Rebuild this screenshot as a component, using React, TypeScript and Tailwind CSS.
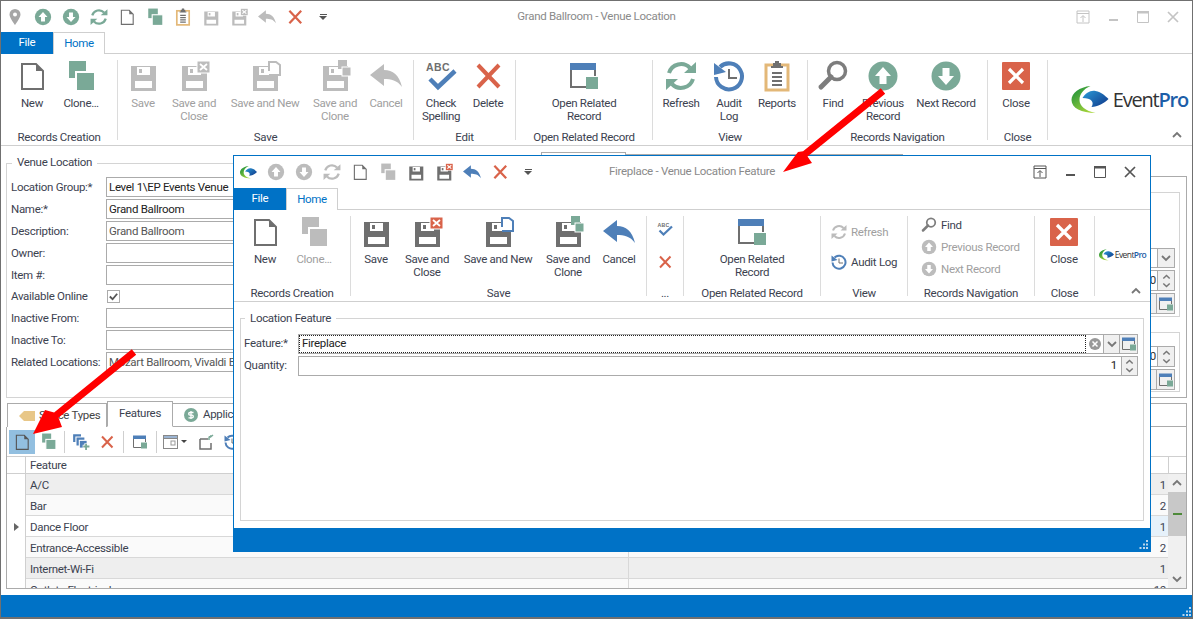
import type { ReactNode } from "react";

const TEAL = "#7aa997";
const GRAY = "#6f6f6f";
const OFF = "#bcbcbc";
const RED = "#d9634a";
const BLUE = "#4e7fb8";

type IconProps = { c?: string; className?: string };

const base = "w-[32px] h-[32px]";

function Doc({ c = GRAY, className = base }: IconProps) {
  return (
    <svg viewBox="0 0 32 32" className={className}>
      <path d="M6 4H20L27 11V29H6Z" fill="none" stroke={c} strokeWidth="2" />
      <path d="M20 4V11H27Z" fill={c} />
    </svg>
  );
}

function Clone({ c = TEAL, className = base }: IconProps) {
  return (
    <svg viewBox="0 0 32 32" className={className}>
      <rect x="4" y="1" width="17" height="17" fill={c} />
      <rect x="11" y="12" width="19" height="19" fill={c} stroke="#fff" strokeWidth="2" />
    </svg>
  );
}

function Save({ c = GRAY, over, tone = "on", className = base }: IconProps & { over?: "close" | "new" | "clone"; tone?: "on" | "off" }) {
  const on = tone === "on";
  return (
    <svg viewBox="0 0 32 32" className={className}>
      <g transform="translate(4 6)">
        <path fillRule="evenodd" fill={c} d="M0 0H25V25H0Z M6 1V9H19V1Z M4 15V22H21V15Z" />
        <rect x="8" y="3" width="3" height="4" fill={c} />
      </g>
      {over === "close" && (
        <g>
          <rect x="19" y="1" width="13" height="12" fill={on ? RED : OFF} stroke="#fff" />
          <path d="M22 4L29 10M29 4L22 10" stroke="#fff" strokeWidth="1.8" />
        </g>
      )}
      {over === "new" && <path d="M20 11V2H27L31 5V15H20" fill="#fff" stroke={on ? BLUE : OFF} strokeWidth="2" />}
      {over === "clone" && (
        <g fill={on ? TEAL : OFF}>
          <rect x="19" y="0" width="9" height="9" />
          <rect x="23" y="7" width="9" height="9" stroke="#fff" />
        </g>
      )}
    </svg>
  );
}

function Undo({ c = BLUE, className = base }: IconProps) {
  return (
    <svg viewBox="0 0 32 32" className={className}>
      <path d="M0 15L14 4V10C23 10 29 15 32 27C27 20 21 19 14 19V26Z" fill={c} />
    </svg>
  );
}

function Cross({ c = RED, className = base }: IconProps) {
  return (
    <svg viewBox="0 0 32 32" className={className}>
      <path d="M6 5L27 27M27 5L6 27" stroke={c} strokeWidth="4" />
    </svg>
  );
}

function Related({ className = base }: IconProps) {
  return (
    <svg viewBox="0 0 32 32" className={className}>
      <rect x="2" y="3" width="26" height="7" fill={BLUE} />
      <path d="M3 10V27H18M27 10V16" stroke={GRAY} strokeWidth="2" fill="none" />
      <rect x="18" y="17" width="12" height="12" fill={TEAL} />
    </svg>
  );
}

function Refresh({ c = TEAL, className = base }: IconProps) {
  return (
    <svg viewBox="0 0 32 32" className={className}>
      <path d="M4 13A12.5 12.5 0 0 1 25 8" stroke={c} strokeWidth="4" fill="none" />
      <path d="M28 19A12.5 12.5 0 0 1 7 24" stroke={c} strokeWidth="4" fill="none" />
      <path d="M19 13H31V2Z M13 19H1V30Z" fill={c} />
    </svg>
  );
}

function Audit({ className = base }: IconProps) {
  return (
    <svg viewBox="0 0 32 32" className={className}>
      <path d="M7 7A13 13 0 1 1 3 17" stroke={BLUE} strokeWidth="4" fill="none" />
      <path d="M1 3L13 12L1 15Z" fill={BLUE} />
      <path d="M16 9V18H24" stroke={GRAY} strokeWidth="2" fill="none" />
    </svg>
  );
}

function Reports({ className = base }: IconProps) {
  return (
    <svg viewBox="0 0 32 32" className={className}>
      <rect x="5" y="5" width="22" height="25" fill="#fff" stroke="#e3b878" strokeWidth="3" />
      <path d="M12 6V3H14V1H18V3H20V6H22V8H10V6Z" fill={GRAY} />
      <path d="M11 13H21M11 17H21M11 21H21M11 25H21" stroke={GRAY} strokeWidth="2" />
    </svg>
  );
}

function Find({ className = base }: IconProps) {
  return (
    <svg viewBox="0 0 32 32" className={className}>
      <circle cx="20" cy="11" r="8.5" fill="none" stroke="#7d7d7d" strokeWidth="3.5" />
      <path d="M14 17L4 27" stroke="#7d7d7d" strokeWidth="5" strokeLinecap="round" />
    </svg>
  );
}

function Circle({ c = TEAL, up, className = base }: IconProps & { up?: boolean }) {
  return (
    <svg viewBox="0 0 32 32" className={className}>
      <circle cx="16" cy="16" r="14.5" fill={c} />
      <path d={up ? "M16 7L24 16H19.5V24H12.5V16H8Z" : "M16 25L24 16H19.5V8H12.5V16H8Z"} fill="#fff" />
    </svg>
  );
}

function CloseBox({ className = base }: IconProps) {
  return (
    <svg viewBox="0 0 32 32" className={className}>
      <rect x="2" y="2" width="28" height="28" rx="1" fill={RED} />
      <path d="M9 9L23 23M23 9L9 23" stroke="#fff" strokeWidth="3.2" />
    </svg>
  );
}

function Spell({ className = base }: IconProps) {
  return (
    <svg viewBox="0 0 32 32" className={className}>
      <text x="1" y="11" fontSize="10.5" fontWeight="700" fill={GRAY} fontFamily="Liberation Sans, sans-serif" letterSpacing="0.4">ABC</text>
      <path d="M5 19L13 27L30 11" fill="none" stroke={BLUE} strokeWidth="4.5" />
    </svg>
  );
}

function Marker({ className = "w-[18px] h-[18px]" }: IconProps) {
  return (
    <svg viewBox="0 0 18 18" className={className}>
      <path fillRule="evenodd" d="M9 1A5.5 5.5 0 0 0 3.5 6.5C3.5 10 9 17 9 17S14.5 10 14.5 6.5A5.5 5.5 0 0 0 9 1Z M9 4.500A2 2 0 1 1 9 8.500A2 2 0 1 1 9 4.500Z" fill="#a6a6a6" />
    </svg>
  );
}

function Swoosh({ className = "" }: IconProps) {
  return (
    <svg viewBox="0 0 37 28" className={className}>
      <defs>
        <linearGradient id="swGreen" x1="0" y1="0" x2="0.7" y2="1">
          <stop offset="0" stopColor="#0f8a3c" />
          <stop offset="1" stopColor="#a6d53a" />
        </linearGradient>
        <linearGradient id="swBlue" x1="0" y1="0" x2="1" y2="0.8">
          <stop offset="0" stopColor="#2a9bd8" />
          <stop offset="1" stopColor="#123f8f" />
        </linearGradient>
      </defs>
      <path d="M19 0C8 1 0 7 0 14C0 22 10 27 24 27C14 25 8 20 8 14C8 8 12 3 19 0Z" fill="url(#swGreen)" />
      <path d="M11 12C14 7 19 4 24 5C30 6 34 10 37 13C33 17 26 21 20 21C23 16 20 12 11 12Z" fill="url(#swBlue)" />
    </svg>
  );
}

function Chevron({ up, className = "w-[10px] h-[10px]", c = "#777" }: IconProps & { up?: boolean }) {
  return (
    <svg viewBox="0 0 10 10" className={className}>
      <path d={up ? "M1 7L5 3L9 7" : "M1 3L5 7L9 3"} fill="none" stroke={c} strokeWidth="1.8" />
    </svg>
  );
}

function WinButtons({ c }: { c: string }) {
  return (
    <div className="flex items-center">
      <span className="flex w-[30px] justify-center">
        <svg viewBox="0 0 14 14" className="h-[14px] w-[14px]">
          <path d="M1 1H13V13H1Z M1 3.500H13" fill="none" stroke={c} />
          <path d="M7 12V6M4.500 8L7 5.500L9.500 8" fill="none" stroke={c} />
        </svg>
      </span>
      <span className="flex w-[30px] justify-center">
        <span className="mt-[6px] h-[2px] w-[9px]" style={{ backgroundColor: c }} />
      </span>
      <span className="flex w-[30px] justify-center">
        <svg viewBox="0 0 12 12" className="h-[12px] w-[12px]">
          <path d="M0.500 0.500H11.500V11.500H0.500Z" fill="none" stroke={c} />
          <rect width="12" height="2.500" fill={c} />
        </svg>
      </span>
      <span className="flex w-[30px] justify-center">
        <svg viewBox="0 0 12 12" className="h-[12px] w-[12px]">
          <path d="M1 1L11 11M11 1L1 11" stroke={c} strokeWidth="1.700" />
        </svg>
      </span>
    </div>
  );
}

function TitleBar({ items, title, winColor, logo, h, pr }: { items: ReactNode[]; title: string; winColor: string; logo?: boolean; h: string; pr: string }) {
  return (
    <div className={`grid grid-cols-[1fr_auto_1fr] items-center ${h}`}>
      <div className="flex items-center">
        {logo && (
          <span className="flex w-[28px] shrink-0 justify-center">
            <Swoosh className="h-[13px] w-[17px]" />
          </span>
        )}
        {items.map((it, i) => (
          <span key={i} className="flex w-[28px] shrink-0 justify-center">{it}</span>
        ))}
        <span className="flex w-[28px] shrink-0 flex-col items-center justify-center gap-[1px]">
          <span className="h-[1px] w-[7px] bg-[#555]" />
          <svg viewBox="0 0 8 4" className="h-[4px] w-[8px]"><path d="M0 0H8L4 4Z" fill="#555" /></svg>
        </span>
      </div>
      <span className="text-[#8a8a8a]">{title}</span>
      <div className={`flex justify-end ${pr}`}><WinButtons c={winColor} /></div>
    </div>
  );
}

function TabRow() {
  return (
    <div className="flex h-[22px] border-b border-[#cfcfcf]">
      <span className="flex h-[22px] w-[52px] items-center justify-center bg-[#0072c6] text-white">File</span>
      <span className="flex h-[22px] w-[52px] items-center justify-center border border-b-0 border-[#cfcfcf] bg-white text-[#0072c6]">Home</span>
    </div>
  );
}

function Btn({ w, icon, text, off }: { w: string; icon: ReactNode; text: ReactNode; off?: boolean }) {
  return (
    <div className={`flex shrink-0 flex-col items-center text-center ${w}`}>
      <div className="flex h-[32px] items-center justify-center">{icon}</div>
      <div className={`mt-[5px] leading-[13px] ${off ? "text-[#a0a0a0]" : ""}`}>{text}</div>
    </div>
  );
}

function Group({ w, label, children, pl = "" }: { w: string; label: string; children: ReactNode; pl?: string }) {
  return (
    <div className={`flex h-[80px] shrink-0 flex-col border-r border-[#dcdcdc] ${w}`}>
      <div className={`flex h-[70px] shrink-0 ${pl}`}>{children}</div>
      <div className="h-[14px] shrink-0 whitespace-nowrap text-center leading-[14px]">{label}</div>
    </div>
  );
}

function SmallRow({ icon, text, off }: { icon: ReactNode; text: string; off?: boolean }) {
  return (
    <div className={`flex h-[22px] items-center gap-[4px] whitespace-nowrap ${off ? "text-[#a0a0a0]" : ""}`}>
      {icon}
      <span className="pt-[1px]">{text}</span>
    </div>
  );
}

function EventProLogo({ small }: { small?: boolean }) {
  return (
    <div className={`flex items-center ${small ? "gap-[1px]" : "gap-[3px]"}`}>
      <Swoosh className={small ? "h-[12px] w-[15px]" : "h-[28px] w-[40px]"} />
      <span className={`font-['Open_Sans',sans-serif] text-[#333] ${small ? "text-[8.500px] tracking-[-0.6px]" : "text-[20px] tracking-[-1.2px]"}`}>
        Event<b className="font-semibold text-[#1d5ea8]">Pro</b>
      </span>
    </div>
  );
}

function MainRibbon() {
  return (
    <div className="flex h-[92px] border-b border-[#cfcfcf] pt-[6px]">
      <Group w="w-[117px]" label="Records Creation" pl="pl-[7px]">
        <Btn w="w-[48px]" icon={<Doc />} text="New" />
        <Btn w="w-[50px]" icon={<Clone />} text="Clone…" />
      </Group>
      <Group w="w-[296px]" label="Save">
        <Btn w="w-[50px]" off icon={<Save c={OFF} />} text="Save" />
        <Btn w="w-[52px]" off icon={<Save c={OFF} over="close" tone="off" />} text={<>Save and<br />Close</>} />
        <Btn w="w-[90px]" off icon={<Save c={OFF} over="new" tone="off" />} text="Save and New" />
        <Btn w="w-[50px]" off icon={<Save c={OFF} over="clone" tone="off" />} text={<>Save and<br />Clone</>} />
        <Btn w="w-[52px]" off icon={<Undo c={OFF} />} text="Cancel" />
      </Group>
      <Group w="w-[102px]" label="Edit">
        <Btn w="w-[54px]" icon={<Spell />} text={<>Check<br />Spelling</>} />
        <Btn w="w-[40px]" icon={<Cross />} text="Delete" />
      </Group>
      <Group w="w-[137px]" label="Open Related Record">
        <Btn w="w-[136px]" icon={<Related />} text={<>Open Related<br />Record</>} />
      </Group>
      <Group w="w-[155px]" label="View">
        <Btn w="w-[56px]" icon={<Refresh />} text="Refresh" />
        <Btn w="w-[40px]" icon={<Audit />} text={<>Audit<br />Log</>} />
        <Btn w="w-[56px]" icon={<Reports />} text="Reports" />
      </Group>
      <Group w="w-[180px]" label="Records Navigation">
        <Btn w="w-[50px]" icon={<Find />} text="Find" />
        <Btn w="w-[50px]" icon={<Circle up />} text={<>Previous<br />Record</>} />
        <Btn w="w-[76px]" icon={<Circle />} text="Next Record" />
      </Group>
      <Group w="w-[60px]" label="Close">
        <Btn w="w-[56px]" icon={<CloseBox />} text="Close" />
      </Group>
      <div className="flex h-[80px] flex-1 flex-col items-end pr-[3px]">
        <div className="mt-[25px] flex h-[45px] w-full items-start justify-end pr-[1px]"><EventProLogo /></div>
        <Chevron up className="mr-[6px] h-[10px] w-[12px]" />
      </div>
    </div>
  );
}

function SubRibbon() {
  return (
    <div className="flex h-[92px] border-b border-[#cfcfcf] pt-[6px]">
      <Group w="w-[117px]" label="Records Creation" pl="pl-[7px]">
        <Btn w="w-[48px]" icon={<Doc />} text="New" />
        <Btn w="w-[50px]" off icon={<Clone c={OFF} />} text="Clone…" />
      </Group>
      <Group w="w-[296px]" label="Save">
        <Btn w="w-[50px]" icon={<Save />} text="Save" />
        <Btn w="w-[52px]" icon={<Save over="close" />} text={<>Save and<br />Close</>} />
        <Btn w="w-[90px]" icon={<Save over="new" />} text="Save and New" />
        <Btn w="w-[50px]" icon={<Save over="clone" />} text={<>Save and<br />Clone</>} />
        <Btn w="w-[52px]" icon={<Undo />} text="Cancel" />
      </Group>
      <Group w="w-[37px]" label="...">
        <div className="flex w-full flex-col items-center gap-[17px] pt-[5px]">
          <Spell className="h-[16px] w-[16px]" />
          <Cross className="h-[16px] w-[16px]" />
        </div>
      </Group>
      <Group w="w-[137px]" label="Open Related Record">
        <Btn w="w-[136px]" icon={<Related />} text={<>Open Related<br />Record</>} />
      </Group>
      <Group w="w-[87px]" label="View">
        <div className="flex flex-col gap-[8px] pl-[10px] pt-[5px]">
          <SmallRow off icon={<Refresh c={OFF} className="h-[16px] w-[16px]" />} text="Refresh" />
          <SmallRow icon={<Audit className="h-[16px] w-[16px]" />} text="Audit Log" />
        </div>
      </Group>
      <Group w="w-[127px]" label="Records Navigation">
        <div className="-mt-[2px] flex flex-col pl-[13px]">
          <SmallRow icon={<Find className="h-[16px] w-[16px]" />} text="Find" />
          <SmallRow off icon={<Circle c={OFF} up className="h-[16px] w-[16px]" />} text="Previous Record" />
          <SmallRow off icon={<Circle c={OFF} className="h-[16px] w-[16px]" />} text="Next Record" />
        </div>
      </Group>
      <Group w="w-[60px]" label="Close">
        <Btn w="w-[58px]" icon={<CloseBox />} text="Close" />
      </Group>
      <div className="flex h-[80px] flex-1 flex-col items-center">
        <div className="mt-[33px] flex h-[37px] w-full items-start justify-center"><EventProLogo small /></div>
        <Chevron up className="ml-[26px] h-[10px] w-[12px]" />
      </div>
    </div>
  );
}

function Field({ label, value, muted }: { label: string; value?: string; muted?: boolean }) {
  return (
    <div className="flex h-[22px] items-center">
      <span className="w-[95px] shrink-0 whitespace-nowrap pt-[1px]">{label}</span>
      <div className={`flex h-[20px] flex-1 items-center overflow-hidden whitespace-nowrap border border-[#ababab] pl-[2px] pt-[1px] ${muted ? "text-[#555]" : "text-[#222]"}`}>{value}</div>
    </div>
  );
}

function VenueForm() {
  return (
    <div className="ml-[5px] mt-[17px] h-[235px] w-[530px] shrink-0 border border-[#d4d4d4] pl-[4px] pr-[6px]">
      <div className="-mt-[9px] ml-[1px] w-fit bg-white px-[5px] leading-[14px]">Venue Location</div>
      <div className="mt-[7px]">
        <Field label="Location Group:*" value="Level 1\EP Events Venue" />
        <Field label="Name:*" value="Grand Ballroom" />
        <Field label="Description:" value="Grand Ballroom" muted />
        <Field label="Owner:" />
        <Field label="Item #:" />
        <div className="flex h-[21px] items-center">
          <span className="w-[96px] shrink-0 whitespace-nowrap pt-[1px]">Available Online</span>
          <span className="flex h-[13px] w-[13px] items-center justify-center border border-[#ababab]">
            <svg viewBox="0 0 12 12" className="h-[11px] w-[11px]"><path d="M2 6L5 9L10 3" fill="none" stroke="#555" strokeWidth="2" /></svg>
          </span>
        </div>
        <Field label="Inactive From:" />
        <Field label="Inactive To:" />
        <Field label="Related Locations:" value="Mozart Ballroom, Vivaldi Ba" muted />
      </div>
    </div>
  );
}

function SideSpinner() {
  return (
    <div className="flex h-[21px] w-[60px] border border-[#ababab] text-[#333]">
      <span className="flex-1 pr-[1px] text-right leading-[19px]">0</span>
      <span className="flex w-[17px] flex-col items-center justify-center border-l border-[#ababab] bg-[#f0f0f0]">
        <Chevron up className="h-[8px] w-[9px]" />
        <Chevron className="h-[8px] w-[9px]" />
      </span>
    </div>
  );
}

function SideButtons() {
  return (
    <div className="mt-[2px] flex h-[21px] w-[60px] justify-end border border-[#ababab] bg-[#f0f0f0]">
      <span className="flex w-[18px] items-center justify-center border-l border-[#ababab]">
        <Related className="h-[16px] w-[16px]" />
      </span>
    </div>
  );
}

function RightPanel() {
  return (
    <div className="ml-[5px] flex-1">
      <div className="flex h-[30px] items-start pt-[6px]">
        <span className="h-[24px] w-[85px] border border-b-0 border-[#ababab]" />
        {["w-[62px]", "w-[63px]", "w-[92px]", "w-[60px]"].map((w, i) => (
          <span key={i} className={`mt-[2px] h-[22px] border-r border-t border-[#ababab] ${w}`} />
        ))}
      </div>
      <div className="mr-[5px] h-[222px] border border-[#ababab] pl-[4px] pr-[6px] pt-[15px]">
        <div className="flex h-[125px] flex-col items-end border border-[#d4d4d4] pr-[4px] pt-[55px]">
          <div className="mb-[2px] flex h-[20px] w-[60px] justify-end border border-[#ababab]">
            <span className="flex w-[17px] items-center justify-center border-l border-[#ababab] bg-[#f0f0f0]"><Chevron /></span>
          </div>
          <SideSpinner />
          <SideButtons />
        </div>
        <div className="mt-[15px] flex h-[60px] flex-col items-end border border-[#d4d4d4] pr-[4px] pt-[13px]">
          <SideSpinner />
          <SideButtons />
        </div>
      </div>
    </div>
  );
}

const rows = [
  { name: "A/C", qty: "1", cls: "bg-[#eeeeee]", qtyCls: "" },
  { name: "Bar", qty: "2", cls: "bg-[#fafafa]", qtyCls: "" },
  { name: "Dance Floor", qty: "1", cls: "bg-white", qtyCls: "bg-[#e6f1fa]" },
  { name: "Entrance-Accessible", qty: "2", cls: "bg-[#fafafa]", qtyCls: "" },
  { name: "Internet-Wi-Fi", qty: "1", cls: "bg-[#eeeeee]", qtyCls: "" },
  { name: "Outlets-Electrical", qty: "10", cls: "bg-[#fafafa]", qtyCls: "" },
];

const tool = "flex h-[24px] shrink-0 items-center justify-center";

function FeatureGrid() {
  return (
    <div className="mx-[5px] flex-1">
      <div className="flex h-[26px] items-end pl-[1px]">
        <span className="flex h-[24px] w-[100px] items-center gap-[4px] whitespace-nowrap border border-b-0 border-[#ababab] pl-[11px]">
          <svg viewBox="0 0 16 10" className="h-[10px] w-[16px] shrink-0"><path d="M0 5L5 0H16V10H5Z" fill="#e8c788" /></svg>
          <span className="text-[#444]">Space Types</span>
        </span>
        <span className="z-10 flex h-[26px] w-[66px] items-center justify-center border border-b-white border-[#ababab] bg-white">Features</span>
        <span className="flex h-[24px] flex-1 items-center gap-[5px] whitespace-nowrap border-b border-r border-t border-[#ababab] pl-[11px]">
          <svg viewBox="0 0 14 14" className="h-[14px] w-[14px] shrink-0">
            <circle cx="7" cy="7" r="7" fill={TEAL} />
            <path d="M9.500 4.500H6A1.300 1.300 0 0 0 6 7.200H8A1.300 1.300 0 0 1 8 9.800H4.500M7 3V11" fill="none" stroke="#fff" strokeWidth="1.300" />
          </svg>
          Applica
        </span>
      </div>
      <div className="flex h-[162px] flex-col border border-t-0 border-[#ababab]">
        <div className="flex h-[29px] shrink-0 items-center pl-[2px]">
          <span className={`${tool} w-[26px] bg-[#92bfe0]`}><Doc className="h-[18px] w-[18px]" c="#555" /></span>
          <span className={`${tool} w-[26px]`}><Clone className="h-[17px] w-[17px]" /></span>
          <span className="mx-[3px] h-[22px] w-[1px] bg-[#cfcfcf]" />
          <span className={`${tool} w-[26px]`}>
            <svg viewBox="0 0 16 16" className="h-[18px] w-[18px]">
              <path d="M1 1H8V3H3V8H1Z M4 4H11V6H6V11H4Z" fill={BLUE} />
              <rect x="7" y="7" width="6" height="6" fill={BLUE} />
              <path d="M12.500 9V15M9.500 12H15.500" stroke="#fff" strokeWidth="3" />
              <path d="M12.500 9.500V15M10 12H15.500" stroke={TEAL} strokeWidth="1.600" />
            </svg>
          </span>
          <span className={`${tool} w-[26px]`}><Cross className="h-[16px] w-[16px]" /></span>
          <span className="mx-[3px] h-[22px] w-[1px] bg-[#cfcfcf]" />
          <span className={`${tool} w-[26px]`}><Related className="h-[16px] w-[16px]" /></span>
          <span className="mx-[3px] h-[22px] w-[1px] bg-[#cfcfcf]" />
          <span className={`${tool} w-[30px] gap-[2px]`}>
            <svg viewBox="0 0 16 14" className="h-[14px] w-[16px]">
              <rect x="0.500" y="0.500" width="14" height="13" fill="#fff" stroke="#888" />
              <rect x="0.500" y="0.500" width="14" height="3" fill="#9bb4d2" stroke="#888" />
              <rect x="8" y="6" width="4" height="4" fill="none" stroke="#999" />
            </svg>
            <svg viewBox="0 0 6 3" className="h-[3px] w-[6px]"><path d="M0 0H6L3 3Z" fill="#444" /></svg>
          </span>
          <span className={`${tool} w-[34px]`}>
            <svg viewBox="0 0 16 16" className="h-[16px] w-[16px]">
              <path d="M1 5H9M1 5V15H12V9" fill="none" stroke={GRAY} strokeWidth="1.500" />
              <path d="M10 6V4C10 2.500 11 2 12.500 2H11M14 1L11 3.500" fill="none" stroke={TEAL} strokeWidth="1.500" />
            </svg>
          </span>
          <span className={`${tool} w-[16px]`}><Audit className="h-[16px] w-[16px] shrink-0" /></span>
        </div>
        <div className="flex h-[18px] shrink-0 border-y border-[#cfcfcf]">
          <span className="w-[19px] shrink-0 border-r border-[#cfcfcf]" />
          <span className="flex-1 pl-[4px] leading-[16px]">Feature</span>
          <span className="w-[18px] shrink-0 border-l border-[#cfcfcf]" />
        </div>
        <div className="flex min-h-0 flex-1">
          <div className="w-[19px] shrink-0 border-r border-[#cfcfcf] pl-[7px] pt-[49px]">
            <svg viewBox="0 0 5 8" className="h-[8px] w-[5px]"><path d="M0 0L5 4L0 8Z" fill="#666" /></svg>
          </div>
          <div className="min-w-0 flex-1 overflow-hidden">
            {rows.map((r) => (
              <div key={r.name} className={`flex h-[21px] border-b border-[#d8d8d8] ${r.cls}`}>
                <span className="w-[603px] shrink-0 border-r border-[#d8d8d8] pl-[4px] pt-[2px] leading-[18px]">{r.name}</span>
                <span className={`flex-1 pr-[2px] pt-[2px] text-right leading-[18px] ${r.qtyCls}`}>{r.qty}</span>
              </div>
            ))}
          </div>
          <div className="flex w-[18px] shrink-0 flex-col items-center bg-[#f0f0f0]">
            <span className="flex h-[18px] items-center"><Chevron up className="h-[10px] w-[12px]" /></span>
            <span className="flex h-[44px] w-full items-center justify-center bg-[#c8c8c8]"><span className="h-[2px] w-[9px] bg-[#4e8a3a]" /></span>
            <span className="flex-1" />
            <span className="flex h-[18px] items-center"><Chevron className="h-[10px] w-[12px]" /></span>
          </div>
        </div>
      </div>
    </div>
  );
}

function Grip() {
  return (
    <svg viewBox="0 0 9 9" className="h-[9px] w-[9px]">
      <path d="M7 0H9V2H7Z M4 3.500H6V5.500H4Z M7 3.500H9V5.500H7Z M0.500 7H2.500V9H0.500Z M4 7H6V9H4Z M7 7H9V9H7Z" fill="#b9d5ec" />
    </svg>
  );
}

function SubWindow() {
  const q = "h-[18px] w-[18px]";
  const items = [
    <Circle c={OFF} up className={q} />,
    <Circle c={OFF} className={q} />,
    <Refresh c={OFF} className={q} />,
    <Doc className={q} />,
    <Clone c={OFF} className={q} />,
    <Save className={q} />,
    <Save over="close" className={q} />,
    <Undo className={q} />,
    <Cross className={q} />,
  ];
  return (
    <div className="absolute left-[232px] top-[154px] flex h-[397px] w-[918px] flex-col border border-[#0072c6] bg-white">
      <TitleBar logo items={items} title="Fireplace - Venue Location Feature" winColor="#555" h="h-[32px]" pr="pr-[5px]" />
      <TabRow />
      <SubRibbon />
      <div className="flex flex-1 flex-col px-[6px] pb-[7px] pt-[16px]">
        <div className="flex-1 border border-[#d4d4d4] pl-[3px] pr-[5px]">
          <div className="-mt-[8px] ml-[1px] w-fit bg-white px-[5px] leading-[14px]">Location Feature</div>
          <div className="mt-[9px] flex h-[20px] items-center">
            <span className="w-[54px] shrink-0">Feature:*</span>
            <div className="flex h-[20px] flex-1 items-center border border-[#ababab]">
              <span className="flex h-[18px] flex-1 items-center border border-dotted border-[#222] pl-[2px] text-[#222]">Fireplace</span>
              <span className="flex w-[17px] justify-center">
                <svg viewBox="0 0 12 12" className="h-[12px] w-[12px]">
                  <circle cx="6" cy="6" r="6" fill="#999" />
                  <path d="M3.500 3.500L8.500 8.500M8.500 3.500L3.500 8.500" stroke="#fff" strokeWidth="1.500" />
                </svg>
              </span>
              <span className="flex h-[18px] w-[16px] items-center justify-center border-l border-[#ababab] bg-[#f0f0f0]"><Chevron /></span>
              <span className="flex h-[18px] w-[18px] items-center justify-center border-l border-[#ababab] bg-[#f0f0f0]"><Related className="h-[16px] w-[16px]" /></span>
            </div>
          </div>
          <div className="mt-[2px] flex h-[20px] items-center">
            <span className="w-[54px] shrink-0">Quantity:</span>
            <div className="flex h-[20px] flex-1 items-center border border-[#ababab]">
              <span className="flex-1 pr-[4px] text-right text-[#222]">1</span>
              <span className="flex h-[18px] w-[16px] flex-col items-center justify-center border-l border-[#ababab] bg-[#f0f0f0]">
                <Chevron up className="h-[8px] w-[9px]" />
                <Chevron className="h-[8px] w-[9px]" />
              </span>
            </div>
          </div>
        </div>
      </div>
      <div className="flex h-[23px] shrink-0 items-end justify-end bg-[#0072c6] pb-[2px] pr-[2px]"><Grip /></div>
    </div>
  );
}

function Arrows() {
  return (
    <svg viewBox="0 0 1193 619" className="pointer-events-none absolute -left-[1px] -top-[1px] h-[619px] w-[1193px]">
      <polygon fill="#ff0000" points="885.200,93.700 807.500,156.600 812,163 783,172 798,152 803.100,151.200 880.800,88.300" />
      <polygon fill="#ff0000" points="136.200,354.700 58.500,417.800 62,427 33,434 45,410 54.100,412.400 131.800,349.300" />
    </svg>
  );
}

export default function App() {
  const q = "h-[18px] w-[18px]";
  const items = [
    <Marker />,
    <Circle up className={q} />,
    <Circle className={q} />,
    <Refresh className={q} />,
    <Doc className={q} />,
    <Clone className={q} />,
    <Reports className={q} />,
    <Save c={OFF} className={q} />,
    <Save c={OFF} over="close" tone="off" className={q} />,
    <Undo c={OFF} className={q} />,
    <Cross className={q} />,
  ];
  return (
    <div className="relative flex h-[619px] w-[1193px] flex-col overflow-hidden border-x border-b-2 border-t border-[#707070] bg-white font-['Roboto',sans-serif] text-[11.5px] tracking-[-0.3px] text-[#3c4250]">
      <TitleBar items={items} title="Grand Ballroom - Venue Location" winColor="#c4c4c4" h="h-[31px]" pr="pr-[4px]" />
      <TabRow />
      <MainRibbon />
      <div className="flex flex-1 flex-col">
        <div className="flex h-[255px] shrink-0">
          <VenueForm />
          <RightPanel />
        </div>
        <FeatureGrid />
      </div>
      <div className="mt-[5px] flex h-[22px] shrink-0 items-end justify-end bg-[#0072c6] pb-[1px] pr-[1px]"><Grip /></div>
      <SubWindow />
      <Arrows />
    </div>
  );
}
